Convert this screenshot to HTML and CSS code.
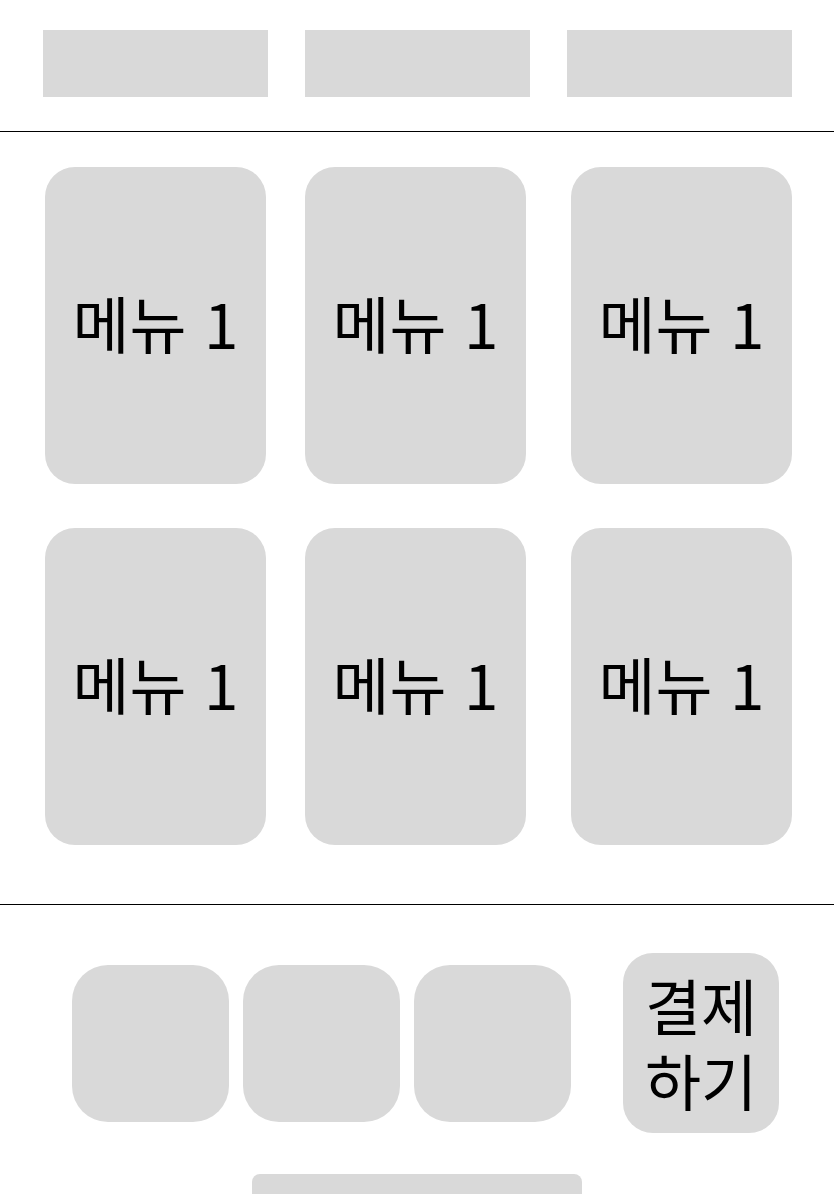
FILE: index.html
```html
<!DOCTYPE html>
<html lang="ko">
<head>
<meta charset="utf-8">
<title>Kiosk</title>
<link rel="stylesheet" href="styles.css">
</head>
<body>
  <header class="tabs">
    <div class="tab"></div>
    <div class="tab"></div>
    <div class="tab"></div>
  </header>
  <main class="menu">
    <div class="menu-row">
      <div class="card">메뉴 1</div>
      <div class="card card--mid">메뉴 1</div>
      <div class="card">메뉴 1</div>
    </div>
    <div class="menu-row">
      <div class="card">메뉴 1</div>
      <div class="card card--mid">메뉴 1</div>
      <div class="card">메뉴 1</div>
    </div>
  </main>
  <footer class="cart">
    <div class="cart-row">
      <div class="slots">
        <div class="slot"></div>
        <div class="slot"></div>
        <div class="slot"></div>
      </div>
      <div class="pay">
        <span class="pay-line">결제</span>
        <span class="pay-line">하기</span>
      </div>
    </div>
    <div class="bar"></div>
  </footer>
</body>
</html>
```

FILE: styles.css
```css
html, body {
  margin: 0;
  padding: 0;
  background: #ffffff;
  font-family: "Noto Sans CJK KR", "Noto Sans", sans-serif;
  color: #000000;
  overflow: hidden;
}

.tabs {
  display: flex;
  justify-content: space-between;
  padding: 30px 42px 34px 43px;
  border-bottom: 1px solid #000000;
}

.tab {
  width: 225px;
  height: 67px;
  background: #d9d9d9;
}

.menu {
  display: flex;
  flex-direction: column;
  gap: 44px;
  padding: 35px 42px 59px 45px;
  border-bottom: 1px solid #000000;
}

.menu-row {
  display: flex;
  justify-content: space-between;
}

.card {
  width: 221px;
  height: 317px;
  box-sizing: border-box;
  padding-bottom: 7px;
  background: #d9d9d9;
  border-radius: 30px;
  display: flex;
  align-items: center;
  justify-content: center;
  font-size: 62px;
  line-height: 1;
  white-space: nowrap;
}

.card--mid {
  margin-right: 6px;
}

.cart {
  display: flex;
  flex-direction: column;
  align-items: center;
  padding-top: 48px;
}

.cart-row {
  align-self: flex-start;
  display: flex;
  align-items: center;
  gap: 52px;
  padding-left: 72px;
}

.slots {
  display: flex;
  gap: 14px;
}

.slot {
  width: 157px;
  height: 157px;
  background: #d9d9d9;
  border-radius: 36px;
}

.pay {
  width: 156px;
  height: 180px;
  box-sizing: border-box;
  padding-bottom: 3px;
  background: #d9d9d9;
  border-radius: 30px;
  display: flex;
  flex-direction: column;
  align-items: center;
  justify-content: center;
  font-size: 61px;
}

.pay-line {
  display: block;
  height: 75px;
  line-height: 75px;
  white-space: nowrap;
}

.bar {
  margin-top: 41px;
  width: 330px;
  height: 60px;
  background: #d9d9d9;
  border-radius: 8px;
}
```
